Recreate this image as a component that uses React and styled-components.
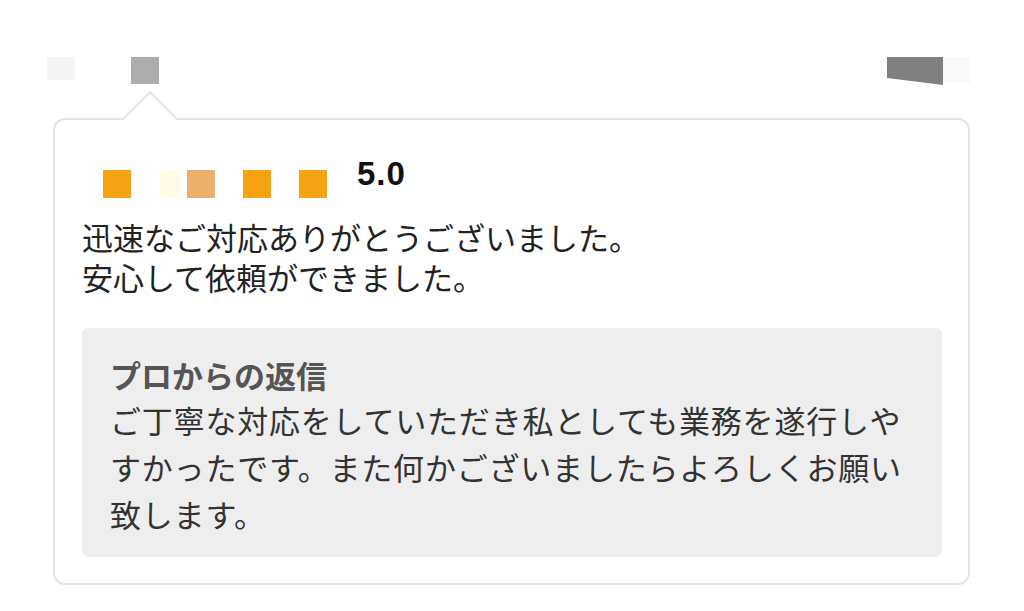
import React from 'react';
import styled, { createGlobalStyle } from 'styled-components';

const GlobalStyle = createGlobalStyle`
  body {
    margin: 0;
    background: #ffffff;
    font-family: "Noto Sans CJK JP", "Noto Sans", sans-serif;
  }
`;

// masked rating marks as they appear in the capture
const stars = [
  { color: '#f6a313', w: 28, gap: 0 },
  { color: '#fffbea', w: 20, gap: 29 },
  { color: '#eab06c', w: 28, gap: 7 },
  { color: '#f6a313', w: 28, gap: 28 },
  { color: '#f6a313', w: 28, gap: 28 },
];

const App = () => {
  return (
    <Page>
      <GlobalStyle />
      <Header>
        <HeaderGroup>
          <Block $w={28} $h={23} $color="#f4f4f4" />
          <Block $w={28} $h={27} $color="#adadad" $gap={56} />
        </HeaderGroup>
        <HeaderGroup>
          <SlantBlock />
          <Block $w={27} $h={26} $color="#f9f9f9" />
        </HeaderGroup>
      </Header>

      <Card>
        <RatingRow>
          <Stars>
            {stars.map((s, i) => (
              <Star key={i} $color={s.color} $w={s.w} $gap={s.gap} />
            ))}
          </Stars>
          <Score>5.0</Score>
        </RatingRow>

        <Comment>
          迅速なご対応ありがとうございました。
          <br />
          安心して依頼ができました。
        </Comment>

        <ReplyBox>
          <ReplyTitle>プロからの返信</ReplyTitle>
          <ReplyText>
            ご丁寧な対応をしていただき私としても業務を遂行しや
            <br />
            すかったです。また何かございましたらよろしくお願い
            <br />
            致します。
          </ReplyText>
        </ReplyBox>
      </Card>
    </Page>
  );
};

export default App;

const Page = styled.div`
  padding: 0 54px 0 47px;
`;

const Header = styled.div`
  display: flex;
  justify-content: space-between;
  align-items: flex-start;
  padding-top: 57px;
  height: 28px;
`;

const HeaderGroup = styled.div`
  display: flex;
  align-items: flex-start;
`;

const Block = styled.div`
  width: ${(p) => p.$w}px;
  height: ${(p) => p.$h}px;
  background: ${(p) => p.$color};
  margin-left: ${(p) => p.$gap || 0}px;
`;

const SlantBlock = styled.div`
  width: 56px;
  height: 28px;
  background: #808080;
  clip-path: polygon(0 0, 100% 0, 100% 100%, 0 75%);
`;

const Card = styled.div`
  position: relative;
  box-sizing: border-box;
  width: 917px;
  margin: 33px 0 0 6px;
  padding: 38px 26px 26px 27px;
  border: 2px solid #e4e4e4;
  border-radius: 12px;
  background: #fff;

  &::before {
    content: '';
    position: absolute;
    box-sizing: border-box;
    top: -21px;
    left: 75px;
    width: 40px;
    height: 40px;
    background: #fff;
    border-top: 2px solid #e4e4e4;
    border-left: 2px solid #e4e4e4;
    transform: rotate(45deg);
  }
`;

const RatingRow = styled.div`
  position: relative;
  display: flex;
  align-items: flex-start;
  height: 40px;
`;

const Stars = styled.div`
  display: flex;
  margin: 12px 0 0 21px;
`;

const Star = styled.span`
  display: block;
  width: ${(p) => p.$w}px;
  height: 28px;
  margin-left: ${(p) => p.$gap}px;
  background: ${(p) => p.$color};
`;

const Score = styled.span`
  margin-left: 30px;
  font-family: "Liberation Sans", Arial, sans-serif;
  font-weight: 700;
  font-size: 33px;
  line-height: 32px;
  letter-spacing: 1px;
  color: #111;
`;

const Comment = styled.p`
  position: relative;
  margin: 19px 0 0;
  font-size: 31px;
  line-height: 40px;
  color: #222;
`;

const ReplyBox = styled.div`
  margin-top: 31px;
  padding: 26px 28px 20px 28px;
  background: #eeeeee;
  border-radius: 6px;
`;

const ReplyTitle = styled.div`
  font-size: 31px;
  font-weight: 700;
  line-height: 42px;
  color: #555;
`;

const ReplyText = styled.p`
  margin: 0;
  font-size: 31px;
  line-height: 47px;
  letter-spacing: 0.8px;
  color: #333;
  white-space: nowrap;
`;
